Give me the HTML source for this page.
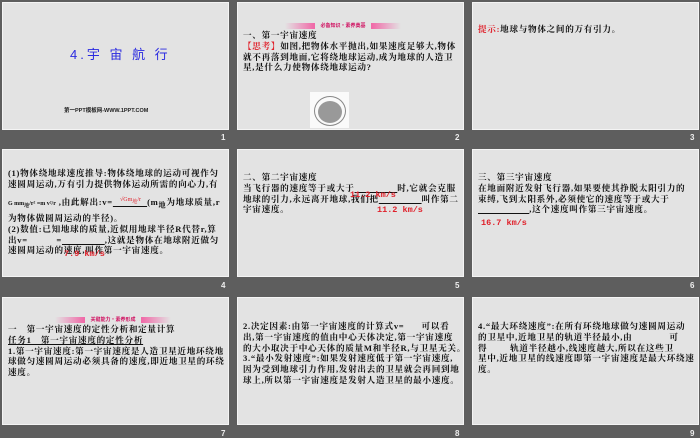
<!DOCTYPE html>
<html><head><meta charset="utf-8"><style>
*{margin:0;padding:0;box-sizing:border-box}
body{width:700px;height:438px;background:#5e5e5e;position:relative;overflow:hidden;font-family:"Liberation Serif","Noto Serif CJK SC",serif}
.s{position:absolute;width:227px;height:128px;background:#e3e3e3;border:1.5px solid #f4f4f4}
.n{position:absolute;color:#eee;font:bold 8px "Liberation Sans",sans-serif}
.t{position:absolute;font-size:8.6px;line-height:10.8px;color:#111;white-space:nowrap;font-weight:bold;letter-spacing:0.7px}
.r{color:#e0202a}
.bn{position:absolute;height:6px;width:116px;background:linear-gradient(90deg,transparent,#f06aa8 25%,#f06aa8 75%,transparent)}
.bn span{position:absolute;left:30px;top:-1px;width:56px;height:8px;background:#e3e3e3;color:#d01060;font:bold 5px "Noto Sans CJK SC",sans-serif;text-align:center;line-height:8px;white-space:nowrap}
.rm{position:absolute;color:#e0202a;font:bold 8.5px "Liberation Mono",monospace}
</style></head><body>
<div class="s" style="left:2px;top:2px"></div>
<div class="s" style="left:237px;top:2px"></div>
<div class="s" style="left:472px;top:2px"></div>
<div class="n" style="left:221px;top:133px">1</div>
<div class="n" style="left:455px;top:133px">2</div>
<div class="n" style="left:690px;top:133px">3</div>
<div class="s" style="left:2px;top:149px"></div>
<div class="s" style="left:237px;top:149px"></div>
<div class="s" style="left:472px;top:149px"></div>
<div class="n" style="left:221px;top:281px">4</div>
<div class="n" style="left:455px;top:281px">5</div>
<div class="n" style="left:690px;top:281px">6</div>
<div class="s" style="left:2px;top:297px"></div>
<div class="s" style="left:237px;top:297px"></div>
<div class="s" style="left:472px;top:297px"></div>
<div class="n" style="left:221px;top:429px">7</div>
<div class="n" style="left:455px;top:429px">8</div>
<div class="n" style="left:690px;top:429px">9</div>

<div style="position:absolute;left:70px;top:44px;color:#2a2ae0;font:13px 'Liberation Sans','Noto Sans CJK SC',sans-serif;letter-spacing:3px">4.宇 宙 航 行</div>
<div style="position:absolute;left:64px;top:106px;color:#222;font:bold 5.5px 'Liberation Sans','Noto Sans CJK SC',sans-serif">第一PPT模板网-WWW.1PPT.COM</div>

<div class="bn" style="left:285px;top:23px"><span>必备知识·素养奠基</span></div>
<div class="t" style="left:243px;top:30px">一、第一宇宙速度<br><span class="r">【思考】</span>如图,把物体水平抛出,如果速度足够大,物体<br>就不再落到地面,它将绕地球运动,成为地球的人造卫<br>星,是什么力使物体绕地球运动?</div>
<div style="position:absolute;left:310px;top:92px;width:39px;height:36px;background:#fafafa"></div>
<div style="position:absolute;left:314px;top:96px;width:32px;height:30px;border:1px solid #888;border-radius:50%"></div>
<div style="position:absolute;left:318px;top:101px;width:24px;height:22px;background:#999;border-radius:50%"></div>

<div class="t" style="left:478px;top:24px"><span class="r">提示:</span>地球与物体之间的万有引力。</div>

<div class="t" style="left:8px;top:168px">(1)物体绕地球速度推导:物体绕地球的运动可视作匀<br>速圆周运动,万有引力提供物体运动所需的向心力,有</div>
<div class="t" style="left:8px;top:197px"><span style="font-size:6px;letter-spacing:0">G mm<sub>地</sub>/r² =m v²/r</span> ,由此解出:v=<u>&nbsp;&nbsp;&nbsp;&nbsp;&nbsp;&nbsp;&nbsp;&nbsp;&nbsp;&nbsp;&nbsp;&nbsp;</u>(m<sub>地</sub>为地球质量,r<br>为物体做圆周运动的半径)。<br>(2)数值:已知地球的质量,近似用地球半径R代替r,算<br>出v=&nbsp;&nbsp;&nbsp;&nbsp;&nbsp;&nbsp;&nbsp;&nbsp;&nbsp;&nbsp;=<u>&nbsp;&nbsp;&nbsp;&nbsp;&nbsp;&nbsp;&nbsp;&nbsp;&nbsp;&nbsp;&nbsp;&nbsp;&nbsp;&nbsp;&nbsp;</u>,这就是物体在地球附近做匀<br>速圆周运动的速度,叫作第一宇宙速度。</div>
<div class="rm" style="left:64px;top:249px">7.9 km/s</div>
<div style="position:absolute;left:120px;top:197px;color:#e0202a;font-size:6px">√Gm<sub>地</sub>/r</div>

<div class="t" style="left:243px;top:172px">二、第二宇宙速度<br>当飞行器的速度等于或大于<u>&nbsp;&nbsp;&nbsp;&nbsp;&nbsp;&nbsp;&nbsp;&nbsp;&nbsp;&nbsp;&nbsp;&nbsp;&nbsp;&nbsp;&nbsp;</u>时,它就会克服<br>地球的引力,永远离开地球,我们把<u>&nbsp;&nbsp;&nbsp;&nbsp;&nbsp;&nbsp;&nbsp;&nbsp;&nbsp;&nbsp;&nbsp;&nbsp;&nbsp;&nbsp;&nbsp;</u>叫作第二<br>宇宙速度。</div>
<div class="rm" style="left:350px;top:190px">11.2 km/s</div>
<div class="rm" style="left:377px;top:205px">11.2 km/s</div>

<div class="t" style="left:478px;top:172px">三、第三宇宙速度<br>在地面附近发射飞行器,如果要使其挣脱太阳引力的<br>束缚,飞到太阳系外,必须使它的速度等于或大于<br><u>&nbsp;&nbsp;&nbsp;&nbsp;&nbsp;&nbsp;&nbsp;&nbsp;&nbsp;&nbsp;&nbsp;&nbsp;&nbsp;&nbsp;&nbsp;&nbsp;&nbsp;&nbsp;</u>,这个速度叫作第三宇宙速度。</div>
<div class="rm" style="left:481px;top:218px">16.7 km/s</div>

<div class="bn" style="left:55px;top:317px"><span>关键能力·素养形成</span></div>
<div class="t" style="left:8px;top:324px">一　第一宇宙速度的定性分析和定量计算<br><u>任务1　第一宇宙速度的定性分析</u><br>1.第一宇宙速度:第一宇宙速度是人造卫星近地环绕地<br>球做匀速圆周运动必须具备的速度,即近地卫星的环绕<br>速度。</div>

<div class="t" style="left:243px;top:321px">2.决定因素:由第一宇宙速度的计算式v=&nbsp;&nbsp;&nbsp;&nbsp;&nbsp;&nbsp;可以看<br>出,第一宇宙速度的值由中心天体决定,第一宇宙速度<br>的大小取决于中心天体的质量M和半径R,与卫星无关。<br>3.“最小发射速度”:如果发射速度低于第一宇宙速度,<br>因为受到地球引力作用,发射出去的卫星就会再回到地<br>球上,所以第一宇宙速度是发射人造卫星的最小速度。</div>

<div class="t" style="left:478px;top:321px">4.“最大环绕速度”:在所有环绕地球做匀速圆周运动<br>的卫星中,近地卫星的轨道半径最小,由&nbsp;&nbsp;&nbsp;&nbsp;&nbsp;&nbsp;&nbsp;&nbsp;&nbsp;&nbsp;&nbsp;&nbsp;&nbsp;可<br>得&nbsp;&nbsp;&nbsp;&nbsp;&nbsp;&nbsp;&nbsp;&nbsp;轨道半径越小,线速度越大,所以在这些卫<br>星中,近地卫星的线速度即第一宇宙速度是最大环绕速<br>度。</div>
</body></html>
